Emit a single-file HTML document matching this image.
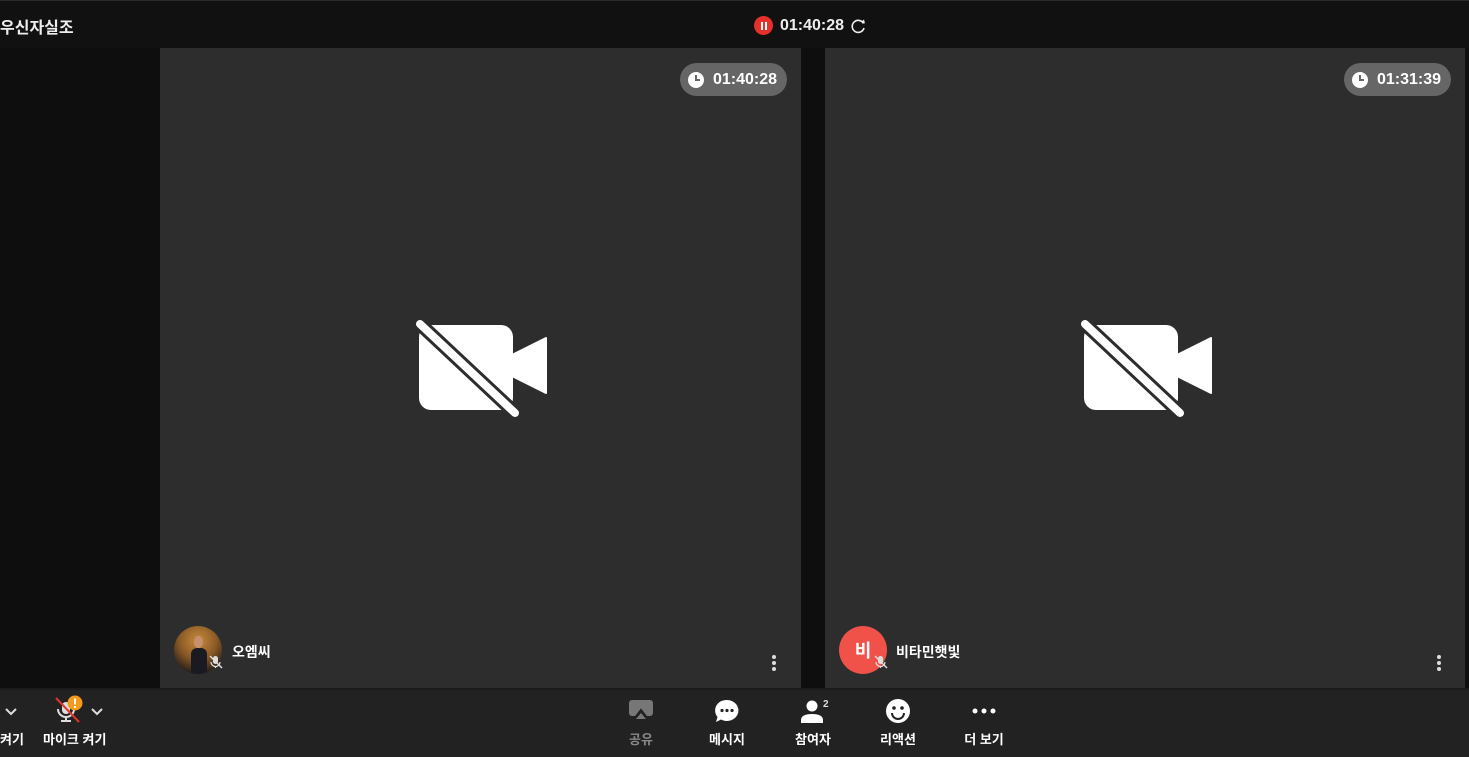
<!DOCTYPE html>
<html><head><meta charset="utf-8">
<style>
*{margin:0;padding:0;box-sizing:border-box}
body{width:1469px;height:757px;overflow:hidden;background:#0e0e0e;font-family:"Liberation Sans","Noto Sans CJK KR",sans-serif;color:#fff;position:relative}
.top{position:absolute;left:0;top:0;width:1469px;height:48px;background:#111;border-top:1px solid #2a2a2a}
.title{position:absolute;left:0;top:13px;font-size:16px;font-weight:bold;color:#eee}
.rec{position:absolute;left:754px;top:15px;display:flex;align-items:center;font-size:16px;font-weight:bold;color:#eee}
.recdot{width:19px;height:19px;border-radius:50%;background:#e8302a;display:flex;align-items:center;justify-content:center;gap:2px;margin-right:7px}
.recdot i{width:2px;height:8px;background:#fff;display:block}
.tile{position:absolute;top:48px;width:641px;height:640px;background:#2d2d2d}
.badge{position:absolute;top:15px;right:14px;height:33px;border-radius:17px;background:#666;display:flex;align-items:center;padding:0 10px 0 8px;font-size:16px;font-weight:bold;color:#fff}
.clock{width:16px;height:16px;border-radius:50%;background:#fff;margin-right:9px;position:relative}
.clock:before{content:"";position:absolute;left:7px;top:3px;width:2px;height:6px;background:#666}
.clock:after{content:"";position:absolute;left:7px;top:7px;width:5px;height:2px;background:#666}
.cam{position:absolute;left:254px;top:270px}
.name{position:absolute;top:594px;font-size:14px;font-weight:bold;color:#fff}
.av{position:absolute;left:14px;top:578px;width:48px;height:48px;border-radius:50%;overflow:hidden}
.dots{position:absolute;top:607px;width:4px}
.dots i{display:block;width:4px;height:4px;border-radius:50%;background:#ddd;margin-bottom:2px}
.bar{position:absolute;left:0;top:688px;width:1469px;height:69px;background:#222;border-top:2px solid #1a1a1a}
.btn{position:absolute;top:0;text-align:center;font-size:13px;font-weight:bold;color:#fff;width:80px}
.btn .lbl{position:absolute;top:39px;left:0;width:80px}
</style></head><body>
<div class="top">
  <div class="title">우신자실조</div>
  <div class="rec"><div class="recdot"><i></i><i></i></div>01:40:28
    <svg width="18" height="18" viewBox="0 0 18 18" style="margin-left:6px"><path d="M13.5 6.5A6 6 0 1 0 14 11" fill="none" stroke="#eee" stroke-width="1.6"/><path d="M11 5l4 1.5-1 -4z" fill="#eee"/></svg>
  </div>
</div>

<div class="tile" style="left:160px">
  <div class="badge"><div class="clock"></div>01:40:28</div>
  <svg class="cam" width="140" height="110" viewBox="0 0 140 110">
    <rect x="5" y="7" width="94" height="85" rx="12" fill="#fff"/>
    <path d="M98 37 L132 20 L132 75 L98 58Z" fill="#fff" stroke="#fff" stroke-width="2" stroke-linejoin="round"/>
    <line x1="6" y1="6" x2="101" y2="95" stroke="#2d2d2d" stroke-width="14" stroke-linecap="round"/>
    <line x1="6" y1="6" x2="101" y2="95" stroke="#fff" stroke-width="8" stroke-linecap="round"/>
  </svg>
  <div class="av" style="background:radial-gradient(circle at 50% 30%,#c98a3c 0,#8a5a26 45%,#2a2018 80%)">
    <div style="position:absolute;left:17px;top:22px;width:16px;height:26px;background:#1a1a22;border-radius:6px 6px 0 0"></div>
    <div style="position:absolute;left:20px;top:10px;width:9px;height:12px;background:#c89070;border-radius:50%"></div>
  </div>
  <svg style="position:absolute;left:48px;top:606px" width="16" height="16" viewBox="0 0 16 16"><rect x="5" y="2" width="5" height="8" rx="2.5" fill="#ddd"/><path d="M3 8a4.5 4.5 0 0 0 9 0M7.5 12v2" stroke="#ddd" fill="none" stroke-width="1.3"/><line x1="2" y1="2" x2="14" y2="14" stroke="#ddd" stroke-width="1.5"/></svg>
  <div class="name" style="left:72px">오엠씨</div>
  <div class="dots" style="left:612px"><i></i><i></i><i></i></div>
</div>

<div class="tile" style="left:825px;width:640px">
  <div class="badge"><div class="clock"></div>01:31:39</div>
  <svg class="cam" width="140" height="110" viewBox="0 0 140 110">
    <rect x="5" y="7" width="94" height="85" rx="12" fill="#fff"/>
    <path d="M98 37 L132 20 L132 75 L98 58Z" fill="#fff" stroke="#fff" stroke-width="2" stroke-linejoin="round"/>
    <line x1="6" y1="6" x2="101" y2="95" stroke="#2d2d2d" stroke-width="14" stroke-linecap="round"/>
    <line x1="6" y1="6" x2="101" y2="95" stroke="#fff" stroke-width="8" stroke-linecap="round"/>
  </svg>
  <div class="av" style="background:#f0524a;display:flex;align-items:center;justify-content:center;font-size:18px;font-weight:bold">비</div>
  <svg style="position:absolute;left:48px;top:606px" width="16" height="16" viewBox="0 0 16 16"><rect x="5" y="2" width="5" height="8" rx="2.5" fill="#ddd"/><path d="M3 8a4.5 4.5 0 0 0 9 0M7.5 12v2" stroke="#ddd" fill="none" stroke-width="1.3"/><line x1="2" y1="2" x2="14" y2="14" stroke="#ddd" stroke-width="1.5"/></svg>
  <div class="name" style="left:71px">비타민햇빛</div>
  <div class="dots" style="left:612px"><i></i><i></i><i></i></div>
</div>

<div class="bar">
  <svg style="position:absolute;left:4px;top:17px" width="14" height="10" viewBox="0 0 14 10"><path d="M2 2l5 5 5-5" stroke="#ddd" stroke-width="2" fill="none"/></svg>
  <div style="position:absolute;left:0;top:39px;font-size:13px;font-weight:bold">켜기</div>
  <svg style="position:absolute;left:54px;top:5px" width="32" height="30" viewBox="0 0 32 30">
    <rect x="8" y="7" width="8" height="12" rx="4" fill="#ddd"/>
    <path d="M4 14a8 8 0 0 0 16 0M12 22v3M7 26h10" stroke="#ddd" stroke-width="2" fill="none"/>
    <line x1="2" y1="3" x2="25" y2="27" stroke="#e0342c" stroke-width="2"/>
    <circle cx="21" cy="8" r="7.5" fill="#f59a1b"/><rect x="20" y="3.5" width="2" height="6" fill="#fff"/><rect x="20" y="11" width="2" height="2" fill="#fff"/>
  </svg>
  <svg style="position:absolute;left:90px;top:17px" width="14" height="10" viewBox="0 0 14 10"><path d="M2 2l5 5 5-5" stroke="#ddd" stroke-width="2" fill="none"/></svg>
  <div style="position:absolute;left:43px;top:39px;font-size:13px;font-weight:bold">마이크 켜기</div>

  <div class="btn" style="left:601px;color:#888">
    <svg style="position:absolute;left:27px;top:10px" width="26" height="22" viewBox="0 0 26 22"><rect x="1" y="0" width="24" height="16" rx="3" fill="#777"/><path d="M13 10l7 9H6z" fill="#222" stroke="#222" stroke-width="2"/><path d="M13 13l5 6H8z" fill="#777"/></svg>
    <div class="lbl">공유</div></div>
  <div class="btn" style="left:687px">
    <svg style="position:absolute;left:27px;top:9px" width="26" height="24" viewBox="0 0 26 24"><path d="M13 1a11.5 10.5 0 1 1-6 19.5L2 23l1.5-5A11 10.5 0 0 1 13 1z" fill="#fff"/><circle cx="8" cy="11.5" r="1.6" fill="#222"/><circle cx="13" cy="11.5" r="1.6" fill="#222"/><circle cx="18" cy="11.5" r="1.6" fill="#222"/></svg>
    <div class="lbl">메시지</div></div>
  <div class="btn" style="left:773px">
    <svg style="position:absolute;left:27px;top:9px" width="32" height="26" viewBox="0 0 32 26"><circle cx="12" cy="7" r="5.5" fill="#fff"/><path d="M1 24v-3c0-4 4-6 11-6s11 2 11 6v3z" fill="#fff"/><text x="23" y="8" font-size="10" fill="#ddd" font-family="Liberation Sans">2</text></svg>
    <div class="lbl">참여자</div></div>
  <div class="btn" style="left:858px">
    <svg style="position:absolute;left:27px;top:8px" width="26" height="26" viewBox="0 0 26 26"><circle cx="13" cy="13" r="12" fill="#fff"/><circle cx="9" cy="10" r="1.8" fill="#222"/><circle cx="17" cy="10" r="1.8" fill="#222"/><path d="M7 15a6 6 0 0 0 12 0" stroke="#222" stroke-width="2" fill="none"/></svg>
    <div class="lbl">리액션</div></div>
  <div class="btn" style="left:944px">
    <svg style="position:absolute;left:27px;top:17px" width="26" height="8" viewBox="0 0 26 8"><circle cx="4" cy="4" r="2.5" fill="#fff"/><circle cx="13" cy="4" r="2.5" fill="#fff"/><circle cx="22" cy="4" r="2.5" fill="#fff"/></svg>
    <div class="lbl">더 보기</div></div>
</div>
</body></html>
